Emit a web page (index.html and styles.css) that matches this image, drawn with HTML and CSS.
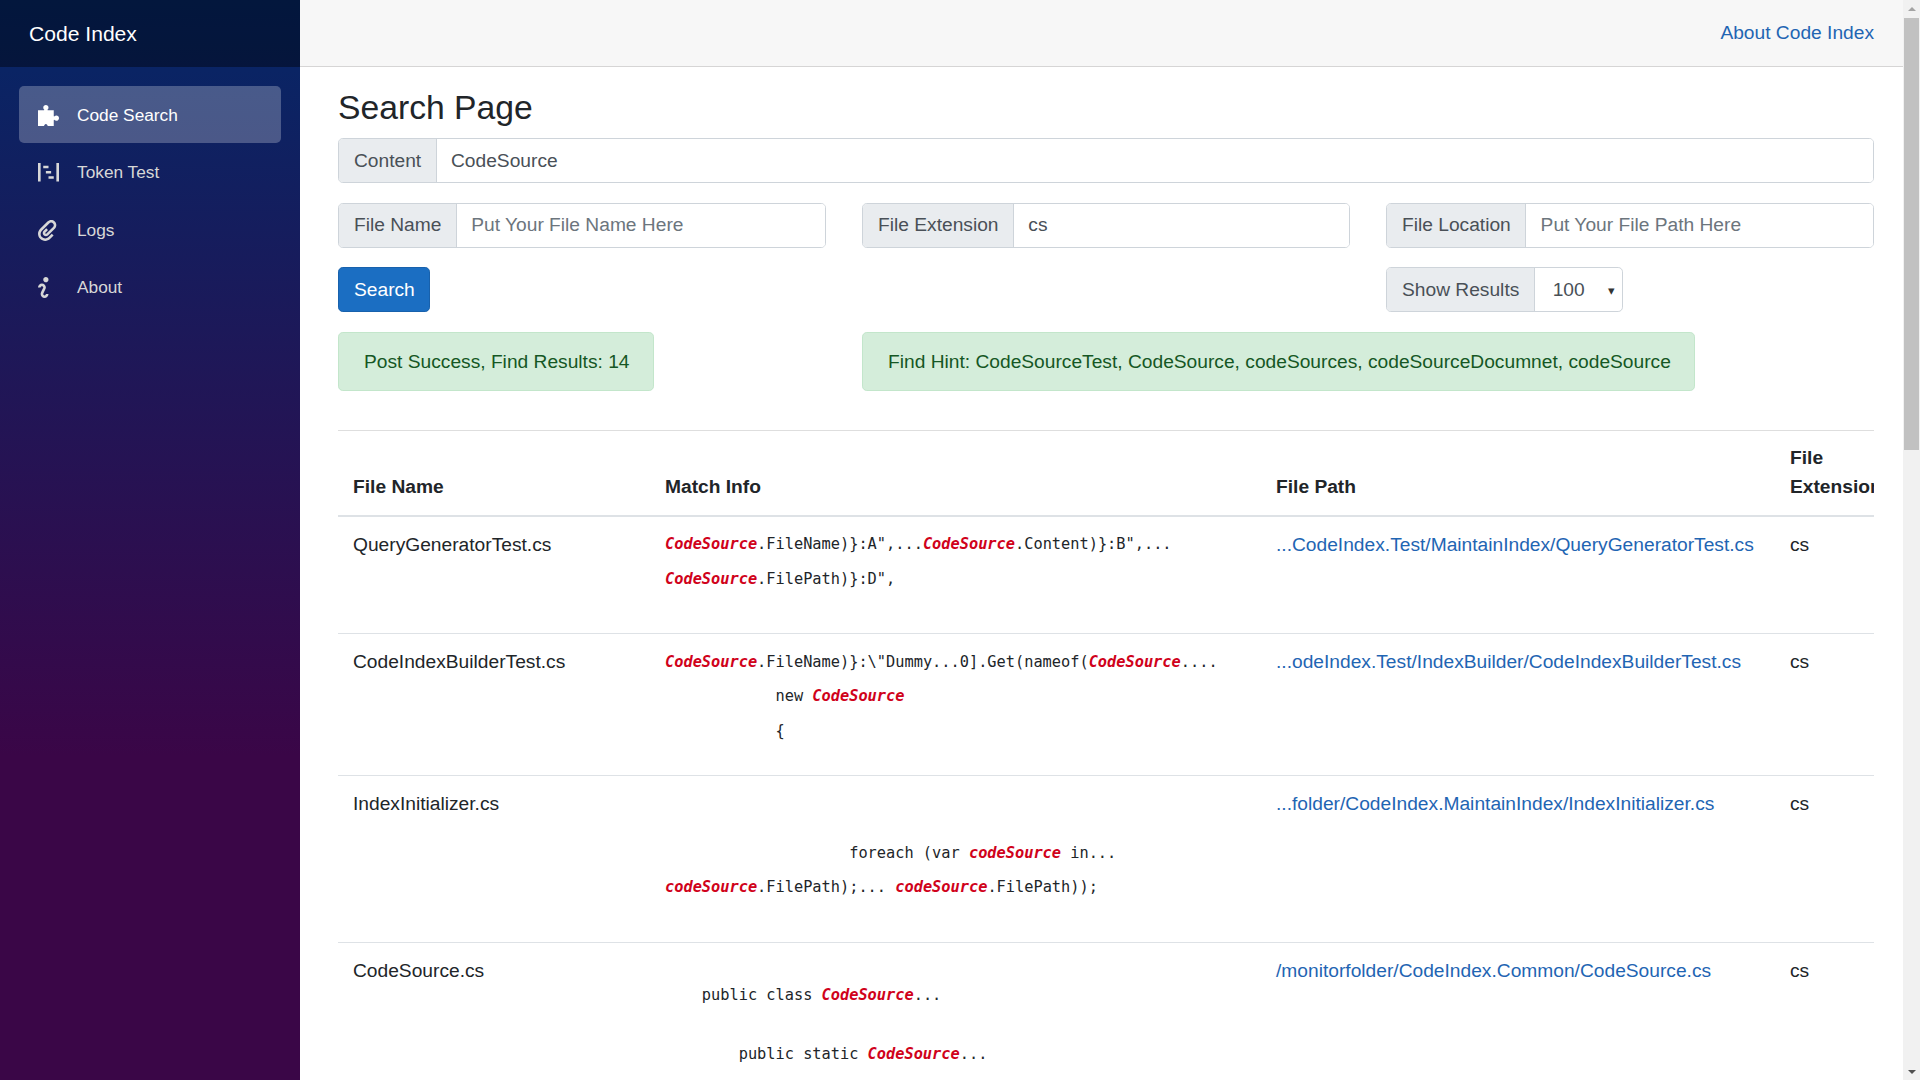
FILE: index.html
```html
<!DOCTYPE html>
<html lang="en">
<head>
  <meta charset="UTF-8">
  <title>Code Index</title>
  <link rel="stylesheet" href="styles.css">
</head>
<body>
  <div class="app">
    <div class="sidebar">
      <div class="brand">Code Index</div>
      <ul class="nav-list">
        <li class="nav-item active">
          <svg class="nav-icon" viewBox="0 0 8 8"><path d="M3 0c-.55 0-1 .45-1 1 0 .28.12.52.31.72.18.19.16.28-.31.28h-2v6h2.3c.1-.4.3-.8.7-.8s.6.4.7.8h2.3v-2c0-.47.09-.49.28-.31.2.19.44.31.72.31.55 0 1-.45 1-1s-.45-1-1-1c-.28 0-.52.12-.72.31-.19.18-.28.16-.28-.31v-2h-2c-.47 0-.49-.09-.31-.28.19-.2.31-.44.31-.72 0-.55-.45-1-1-1z"/></svg>
          Code Search
        </li>
        <li class="nav-item">
          <svg class="nav-icon" viewBox="0 0 8 8"><path d="M0 0v7h1v-7h-1zm7 0v7h1v-7h-1zm-5 1v1h2v-1h-2zm1 2v1h2v-1h-2zm1 2v1h2v-1h-2z"/></svg>
          Token Test
        </li>
        <li class="nav-item">
          <svg class="nav-icon" viewBox="0 0 8 8"><path d="M5 0c-.51 0-1.02.21-1.41.59l-2.78 2.72c-1.07 1.07-1.07 2.8 0 3.88 1.07 1.07 2.8 1.07 3.88 0l1.25-1.25-.69-.69-1.16 1.13-.09.13c-.69.69-1.81.69-2.5 0-.68-.68-.66-1.76 0-2.44l2.78-2.78c.39-.39 1.04-.39 1.44 0 .39.39.37 1.01 0 1.41l-2.5 2.47c-.1.1-.27.1-.38 0-.1-.1-.1-.27 0-.38l.06-.03.91-.94-.69-.69-.97.97c-.48.48-.48 1.27 0 1.75s1.27.48 1.75 0l2.5-2.5c.78-.78.78-2.04 0-2.81-.39-.39-.89-.59-1.41-.59z"/></svg>
          Logs
        </li>
        <li class="nav-item">
          <svg class="nav-icon" viewBox="2 0 8 8"><path d="M5 0c-.55 0-1 .45-1 1s.45 1 1 1 1-.45 1-1-.45-1-1-1zm-1.5 2.5c-.83 0-1.5.67-1.5 1.5h1c0-.28.22-.5.5-.5s.5.22.5.5-1 1.64-1 2.5c0 .86.67 1.5 1.5 1.5s1.5-.67 1.5-1.5h-1c0 .28-.22.5-.5.5s-.5-.22-.5-.5c0-.36 1-1.84 1-2.5 0-.81-.67-1.5-1.5-1.5z"/></svg>
          About
        </li>
      </ul>
    </div>

    <div class="main">
      <div class="top-row"><a href="#" class="link">About Code Index</a></div>

      <div class="content">
        <h2 class="page-title">Search Page</h2>

        <div class="input-group low-text">
          <span class="addon">Content</span>
          <input type="text" class="field" value="CodeSource">
        </div>

        <div class="form-row">
          <div class="input-group">
            <span class="addon">File Name</span>
            <input type="text" class="field" placeholder="Put Your File Name Here">
          </div>
          <div class="input-group">
            <span class="addon">File Extension</span>
            <input type="text" class="field" value="cs">
          </div>
          <div class="input-group">
            <span class="addon">File Location</span>
            <input type="text" class="field" placeholder="Put Your File Path Here">
          </div>
        </div>

        <div class="form-row action-row">
          <div><button class="btn">Search</button></div>
          <div></div>
          <div class="input-group results-group low-text">
            <span class="addon">Show Results</span>
            <div class="fake-select"><span>100</span><span class="arrow">&#9662;</span></div>
          </div>
        </div>

        <div class="form-row alert-row">
          <div><div class="alert">Post Success, Find Results: 14</div></div>
          <div class="hint-col"><div class="alert">Find Hint: CodeSourceTest, CodeSource, codeSources, codeSourceDocumnet, codeSource</div></div>
        </div>

        <hr class="divider">

        <div class="table-wrap">
          <table class="result-table">
            <colgroup>
              <col class="col-name"><col class="col-match"><col class="col-path"><col class="col-ext">
            </colgroup>
            <thead>
              <tr>
                <th>File Name</th>
                <th>Match Info</th>
                <th>File Path</th>
                <th>File Extension</th>
              </tr>
            </thead>
            <tbody>
              <tr class="row-a">
                <td>QueryGeneratorTest.cs</td>
                <td class="match">
                  <div class="code"><b>CodeSource</b>.FileName)}:A",...<b>CodeSource</b>.Content)}:B",...</div>
                  <div class="code"><b>CodeSource</b>.FilePath)}:D",</div>
                </td>
                <td><a href="#" class="link">...CodeIndex.Test/MaintainIndex/QueryGeneratorTest.cs</a></td>
                <td>cs</td>
              </tr>
              <tr class="row-b">
                <td>CodeIndexBuilderTest.cs</td>
                <td class="match">
                  <div class="code"><b>CodeSource</b>.FileName)}:\"Dummy...0].Get(nameof(<b>CodeSource</b>....</div>
                  <div class="code">            new <b>CodeSource</b></div>
                  <div class="code">            {</div>
                </td>
                <td><a href="#" class="link">...odeIndex.Test/IndexBuilder/CodeIndexBuilderTest.cs</a></td>
                <td>cs</td>
              </tr>
              <tr class="row-c">
                <td>IndexInitializer.cs</td>
                <td class="match">
                  <div class="blank"></div>
                  <div class="blank"></div>
                  <div class="code">                    foreach (var <b>codeSource</b> in...</div>
                  <div class="code"><b>codeSource</b>.FilePath);... <b>codeSource</b>.FilePath));</div>
                </td>
                <td><a href="#" class="link">...folder/CodeIndex.MaintainIndex/IndexInitializer.cs</a></td>
                <td>cs</td>
              </tr>
              <tr class="row-d">
                <td>CodeSource.cs</td>
                <td class="match">
                  <div class="blank"></div>
                  <div class="code">    public class <b>CodeSource</b>...</div>
                  <div class="blank"></div>
                  <div class="code">        public static <b>CodeSource</b>...</div>
                </td>
                <td><a href="#" class="link">/monitorfolder/CodeIndex.Common/CodeSource.cs</a></td>
                <td>cs</td>
              </tr>
            </tbody>
          </table>
        </div>
      </div>
    </div>

    <div class="scrollbar">
      <span class="scroll-up"></span>
      <div class="scroll-track"><div class="scroll-thumb"></div></div>
      <span class="scroll-down"></span>
    </div>
  </div>
</body>
</html>
```

FILE: styles.css
```css
* {
  box-sizing: border-box;
}

body {
  margin: 0;
  font-family: "Liberation Sans", Arial, sans-serif;
  font-size: 19.2px;
  line-height: 1.5;
  color: #212529;
  background-color: #fff;
}

.app {
  display: flex;
  height: 100vh;
  overflow: hidden;
}

/* sidebar */
.sidebar {
  flex: 0 0 300px;
  background-image: linear-gradient(180deg, #052767 0%, #3a0647 70%);
}

.brand {
  height: 67px;
  padding-left: 29px;
  display: flex;
  align-items: center;
  font-size: 21.1px;
  color: #fff;
  background-color: rgba(0, 0, 0, 0.4);
}

.nav-list {
  list-style: none;
  margin: 0;
  padding: 19px 19px 0;
}

.nav-item {
  height: 57.4px;
  padding: 2px 0 0 19px;
  display: flex;
  align-items: center;
  border-radius: 5px;
  font-size: 17.3px;
  color: #d7d7d7;
}

.nav-item.active {
  color: #fff;
  background-color: rgba(255, 255, 255, 0.25);
}

.nav-icon {
  width: 21px;
  height: 21px;
  margin-right: 18px;
  fill: currentColor;
  flex: none;
}

/* top bar */
.main {
  flex: 1;
  min-width: 0;
}

.top-row {
  height: 67px;
  padding: 0 29px 0 0;
  display: flex;
  align-items: center;
  justify-content: flex-end;
  background-color: #f7f7f7;
  border-bottom: 1px solid #d6d5d5;
}

.link {
  color: #1f65b3;
  text-decoration: none;
}

/* search form */
.content {
  padding: 17px 29px 0 38px;
}

.page-title {
  margin: 0 0 8px;
  height: 46px;
  font-size: 33.7px;
  font-weight: 400;
  line-height: 46px;
}

.input-group {
  display: flex;
  height: 45px;
  margin-bottom: 20px;
  border: 1px solid #ced4da;
  border-radius: 4.8px;
  overflow: hidden;
}

.addon {
  padding: 0 14.4px 0 15px;
  display: flex;
  align-items: center;
  color: #495057;
  background-color: #e9ecef;
  border-right: 1px solid #ced4da;
  white-space: nowrap;
}

.field {
  flex: 1;
  min-width: 0;
  padding: 0 14.4px;
  border: none;
  outline: none;
  font: inherit;
  color: #495057;
}

.field::placeholder {
  color: #6c757d;
  opacity: 1;
}

.low-text .addon,
.low-text .field,
.low-text .fake-select {
  padding-top: 2px;
}

.form-row {
  display: grid;
  grid-template-columns: 488px 488px 488px;
  column-gap: 36px;
}

.action-row {
  margin-top: -1px;
}

.btn {
  display: block;
  height: 45px;
  padding: 2px 14px 0 15px;
  font: inherit;
  color: #fff;
  background-color: #1b6ec2;
  border: 1px solid #1861ac;
  border-radius: 4.8px;
}

.results-group {
  width: 237px;
}

.fake-select {
  flex: 1;
  padding: 0 7px 0 18px;
  display: flex;
  align-items: center;
  justify-content: space-between;
  color: #495057;
}

.arrow {
  font-size: 13px;
  color: #333;
}

.alert-row {
  grid-template-columns: 488px 1011px;
}

.alert {
  display: inline-block;
  height: 59px;
  padding: 0 23px 0 25px;
  line-height: 57px;
  color: #155724;
  background-color: #d4edda;
  border: 1px solid #c3e6cb;
  border-radius: 4.8px;
  white-space: nowrap;
}

.divider {
  margin: 39px 0 0;
  border: none;
  border-top: 1px solid #dedede;
}

/* results */
.table-wrap {
  overflow: hidden;
}

.result-table {
  width: 1562px;
  table-layout: fixed;
  border-collapse: collapse;
}

.col-name { width: 312px; }
.col-match { width: 611px; }
.col-path { width: 514px; }
.col-ext { width: 125px; }

.result-table th {
  padding: 13px 15px;
  text-align: left;
  vertical-align: bottom;
  border-bottom: 2px solid #dee2e6;
}

.result-table td {
  padding: 14px 15px 0;
  vertical-align: top;
  border-bottom: 1px solid #dee2e6;
}

.row-a td { height: 118px; }
.row-b td { height: 142px; }
.row-c td { height: 167px; }
.row-d td { height: 300px; }

.result-table td.match {
  padding-top: 10.5px;
}

.code {
  height: 34.5px;
  font-family: "DejaVu Sans Mono", "Liberation Mono", monospace;
  font-size: 15.3px;
  line-height: 34.5px;
  white-space: pre;
}

.code b {
  color: #d0021b;
  font-style: italic;
}

.blank {
  height: 24.5px;
}

/* page scrollbar */
.scrollbar {
  flex: 0 0 17px;
  display: flex;
  flex-direction: column;
  background-color: #f1f1f1;
}

.scroll-up,
.scroll-down {
  flex: 0 0 17px;
  display: flex;
  align-items: center;
  justify-content: center;
}

.scroll-up::before,
.scroll-down::before {
  content: "";
  border-left: 4px solid transparent;
  border-right: 4px solid transparent;
}

.scroll-up::before {
  border-bottom: 4px solid #a3a3a3;
}

.scroll-down::before {
  border-top: 4px solid #505050;
}

.scroll-track {
  flex: 1;
  padding: 1px 1px 0;
}

.scroll-thumb {
  height: 432px;
  background-color: #c1c1c1;
}
```
